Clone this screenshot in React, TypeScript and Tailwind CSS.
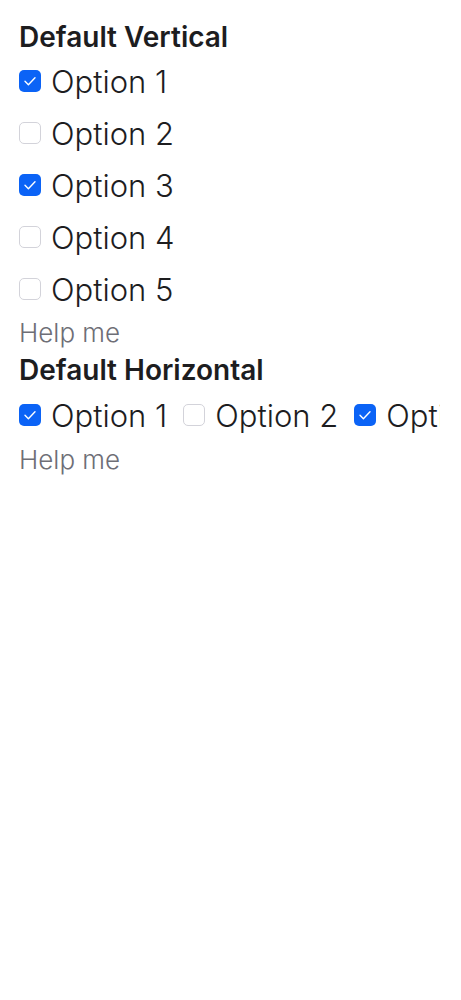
import { useState } from "react";

type Opt = { label: string; checked: boolean };

function Box({ checked }: { checked: boolean }) {
  return checked ? (
    <span className="flex h-[22px] w-[22px] shrink-0 items-center justify-center rounded-[5px] bg-[#0b63f6]">
      <svg width="22" height="22" viewBox="0 0 22 22" fill="none">
        <path d="M6 11.3l3.4 3.4 6.6-7" stroke="white" strokeWidth="1.4" strokeLinecap="round" strokeLinejoin="round" />
      </svg>
    </span>
  ) : (
    <span className="h-[22px] w-[22px] shrink-0 rounded-[5px] border border-[#d3d3da] bg-white" />
  );
}

function Item({ opt, onToggle }: { opt: Opt; onToggle: () => void }) {
  return (
    <label onClick={onToggle} className="flex h-[52px] shrink-0 cursor-pointer items-center gap-[10px]">
      <Box checked={opt.checked} />
      <span className="whitespace-nowrap text-[31px] font-light leading-none text-[#1d1d1f]">{opt.label}</span>
    </label>
  );
}

export default function App() {
  const [vert, setVert] = useState<Opt[]>([
    { label: "Option 1", checked: true },
    { label: "Option 2", checked: false },
    { label: "Option 3", checked: true },
    { label: "Option 4", checked: false },
    { label: "Option 5", checked: false },
  ]);
  const [horiz, setHoriz] = useState<Opt[]>([
    { label: "Option 1", checked: true },
    { label: "Option 2", checked: false },
    { label: "Option 3", checked: true },
    { label: "Option 4", checked: false },
  ]);

  const toggle = (list: Opt[], set: (o: Opt[]) => void, i: number) =>
    set(list.map((o, j) => (j === i ? { ...o, checked: !o.checked } : o)));

  return (
    <div className="min-h-screen bg-white font-['Inter',sans-serif]">
      <div className="ml-[19px] mr-[21px] overflow-hidden pt-[19px]">
        <h2 className="text-[28px] font-semibold leading-[36px] text-[#1d1d1f]">Default Vertical</h2>
        <div className="flex flex-col">
          {vert.map((o, i) => (
            <Item key={i} opt={o} onToggle={() => toggle(vert, setVert, i)} />
          ))}
        </div>
        <p className="text-[26px] font-light leading-[36px] text-[#6e6e76]">Help me</p>

        <h2 className="text-[28px] font-semibold leading-[38px] text-[#1d1d1f]">Default Horizontal</h2>
        <div className="flex gap-[16px]">
          {horiz.map((o, i) => (
            <Item key={i} opt={o} onToggle={() => toggle(horiz, setHoriz, i)} />
          ))}
        </div>
        <p className="text-[26px] font-light leading-[38px] text-[#6e6e76]">Help me</p>
      </div>
    </div>
  );
}
